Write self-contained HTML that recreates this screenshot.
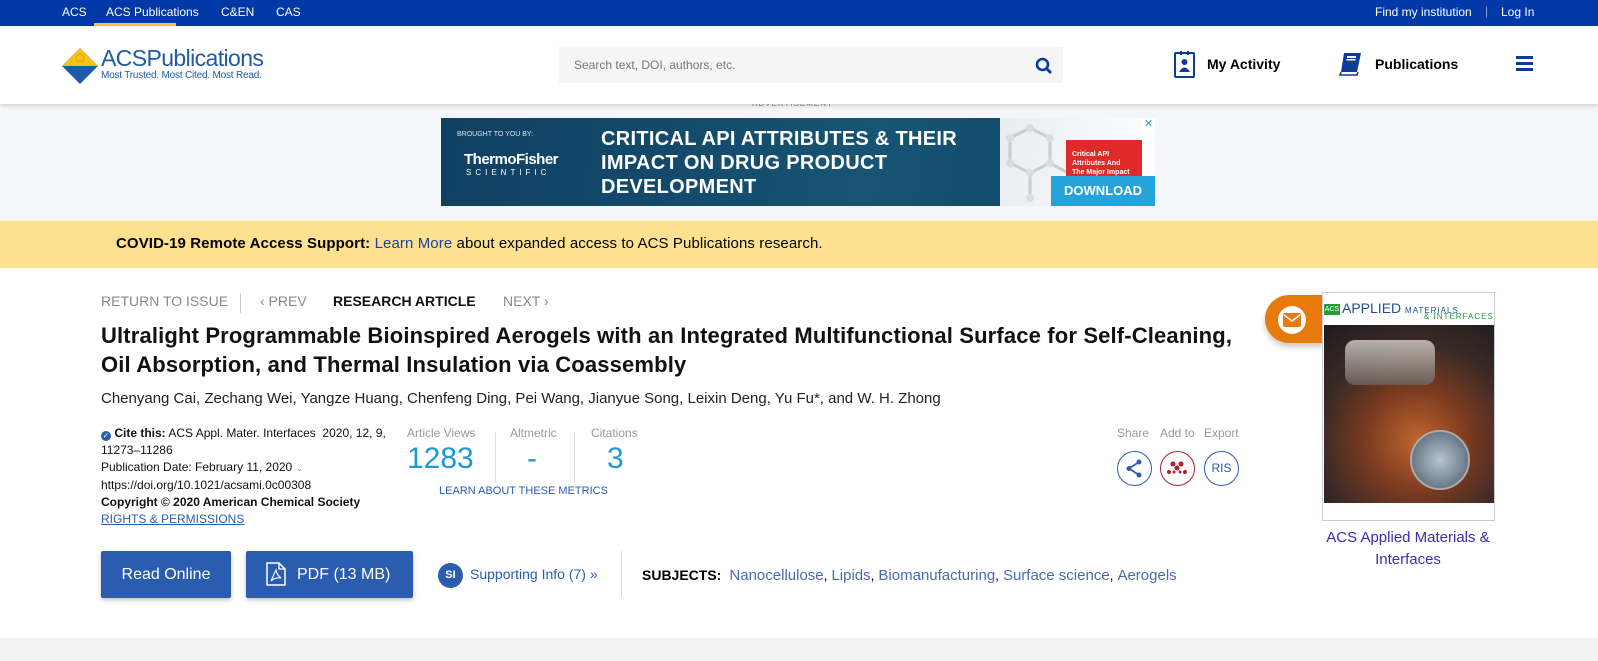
<!DOCTYPE html>
<html><head><meta charset="utf-8"><style>
*{margin:0;padding:0;box-sizing:border-box}
body{width:1598px;height:661px;position:relative;overflow:hidden;font-family:"Liberation Sans",Arial,sans-serif;background:#fff;color:#000}
.a{position:absolute;white-space:nowrap}
a{text-decoration:none}
</style></head><body>
<!-- top bar -->
<div class="a" style="left:0;top:0;width:1598px;height:26px;background:#0038a8"></div>
<div class="a" style="left:62px;top:5px;font-size:12px;color:#fff">ACS</div>
<div class="a" style="left:106px;top:5px;font-size:12px;color:#fff">ACS Publications</div>
<div class="a" style="left:94px;top:23px;width:82px;height:3px;background:#fbc830"></div>
<div class="a" style="left:221px;top:5px;font-size:12px;color:#fff">C&amp;EN</div>
<div class="a" style="left:276px;top:5px;font-size:12px;color:#fff">CAS</div>
<div class="a" style="left:1375px;top:5px;font-size:12px;color:#fff">Find my institution</div>
<div class="a" style="left:1485px;top:4px;font-size:12px;color:#8aa0d8">|</div>
<div class="a" style="left:1501px;top:5px;font-size:12px;color:#fff">Log In</div>
<!-- header -->
<div class="a" style="left:0;top:26px;width:1598px;height:78px;background:#fff;box-shadow:0 2px 4px rgba(0,0,0,.15);z-index:2">
 <svg class="a" style="left:62px;top:22px" width="36" height="36" viewBox="0 0 36 36"><polygon points="0,18 18,0 36,18 18,36" fill="#1f5aa6"/><polygon points="0,18 18,0 36,18" fill="#f5c21b"/><circle cx="18" cy="10" r="4" fill="#f5c21b" stroke="#e0a800"/></svg>
 <div class="a" style="left:101px;top:19px;font-size:23px;color:#1f5aa6;letter-spacing:-.6px">ACS<span style="font-weight:300">Publications</span></div>
 <div class="a" style="left:101px;top:44px;font-size:10px;color:#1f5aa6;letter-spacing:-.2px">Most Trusted. Most Cited. Most Read.</div>
 <div class="a" style="left:559px;top:21px;width:504px;height:36px;background:#f5f5f5"></div>
 <div class="a" style="left:574px;top:32px;font-size:12px;color:#777">Search text, DOI, authors, etc.</div>
 <svg class="a" style="left:1035px;top:31px" width="18" height="18" viewBox="0 0 18 18"><circle cx="7.5" cy="7.5" r="5.5" fill="none" stroke="#0d3b99" stroke-width="2.6"/><line x1="11.5" y1="11.5" x2="16" y2="16" stroke="#0d3b99" stroke-width="2.8"/></svg>
 <svg class="a" style="left:1173px;top:24px" width="23" height="28" viewBox="0 0 23 28"><rect x="2" y="3" width="19" height="24" fill="none" stroke="#0d3b99" stroke-width="2" rx="1"/><rect x="7" y="1" width="2" height="4" fill="#0d3b99"/><rect x="14" y="1" width="2" height="4" fill="#0d3b99"/><circle cx="11.5" cy="12" r="3" fill="#0d3b99"/><path d="M6 22 Q11.5 13 17 22Z" fill="#0d3b99"/></svg>
 <div class="a" style="left:1207px;top:30px;font-size:14px;font-weight:bold">My Activity</div>
 <svg class="a" style="left:1338px;top:26px" width="24" height="24" viewBox="0 0 24 24"><path d="M6 1 H23 L19 20 H3 Z" fill="#0d3b99"/><path d="M3 20 L2 23 H19 L20 20" fill="none" stroke="#0d3b99" stroke-width="1.5"/><rect x="9" y="4" width="9" height="2" fill="#fff"/><rect x="8.5" y="7" width="9" height="1.5" fill="#fff"/></svg>
 <div class="a" style="left:1375px;top:30px;font-size:14px;font-weight:bold">Publications</div>
 <div class="a" style="left:1516px;top:30px;width:17px;height:3px;background:#0d3b99;box-shadow:0 6px 0 #0d3b99,0 12px 0 #0d3b99"></div>
</div>
<!-- ad -->
<div class="a" style="left:0;top:104px;width:1598px;height:117px;background:#f5f6fa"></div>
<div class="a" style="left:752px;top:99px;font-size:8px;color:#888;letter-spacing:1px">ADVERTISEMENT</div>
<div class="a" style="left:441px;top:118px;width:714px;height:88px;background:linear-gradient(100deg,#0f3f62,#175473 60%,#0e4466)"></div>
<div class="a" style="left:457px;top:131px;font-size:7px;color:#dfe7ee">BROUGHT TO YOU BY:</div>
<div class="a" style="left:464px;top:151px;font-size:15px;font-weight:bold;color:#fff;letter-spacing:-.5px">ThermoFisher</div>
<div class="a" style="left:466px;top:168px;font-size:8px;color:#fff;letter-spacing:4px">SCIENTIFIC</div>
<div class="a" style="left:601px;top:127px;font-size:20px;font-weight:bold;color:#fff;line-height:24px;letter-spacing:.3px">CRITICAL API ATTRIBUTES &amp; THEIR<br>IMPACT ON DRUG PRODUCT<br>DEVELOPMENT</div>
<div class="a" style="left:1000px;top:118px;width:155px;height:88px;background:linear-gradient(100deg,#e8ecf0,#ffffff)"></div>
<svg class="a" style="left:1000px;top:118px" width="70" height="88" viewBox="0 0 70 88"><path d="M10 20 L30 10 L50 20 L50 45 L30 55 L10 45 Z M30 55 L30 80 M50 45 L68 55" fill="none" stroke="#c8cdd4" stroke-width="3"/><g fill="#d8dde3"><circle cx="10" cy="20" r="4"/><circle cx="30" cy="10" r="4"/><circle cx="50" cy="20" r="4"/><circle cx="50" cy="45" r="4"/><circle cx="30" cy="55" r="4"/><circle cx="10" cy="45" r="4"/><circle cx="30" cy="80" r="4"/></g></svg>
<div class="a" style="left:1066px;top:140px;width:76px;height:50px;background:#e02a2a"></div>
<div class="a" style="left:1072px;top:150px;font-size:7px;color:#fff;font-weight:bold;line-height:9px">Critical API<br>Attributes And<br>The Major Impact</div>
<div class="a" style="left:1051px;top:176px;width:104px;height:30px;background:#27a3dc;color:#fff;font-weight:bold;font-size:13px;text-align:center;line-height:30px">DOWNLOAD</div>
<div class="a" style="left:1142px;top:118px;width:13px;height:13px;background:#fff;color:#27a3dc;font-size:11px;line-height:13px;text-align:center">✕</div>
<!-- covid -->
<div class="a" style="left:0;top:221px;width:1598px;height:47px;background:#fde18f"></div>
<div class="a" style="left:116px;top:235px;font-size:15px;letter-spacing:.1px"><b>COVID-19 Remote Access Support:</b> <span style="color:#1f3fa8">Learn More</span> about expanded access to ACS Publications research.</div>
<!-- nav -->
<div class="a" style="left:101px;top:293px;font-size:14px;color:#888">RETURN TO ISSUE</div>
<div class="a" style="left:240px;top:293px;width:1px;height:20px;background:#ccc"></div>
<div class="a" style="left:260px;top:293px;font-size:14px;color:#888">‹ PREV</div>
<div class="a" style="left:333px;top:293px;font-size:14px;font-weight:bold;color:#111">RESEARCH ARTICLE</div>
<div class="a" style="left:503px;top:293px;font-size:14px;color:#888">NEXT ›</div>
<div class="a" style="left:101px;top:321px;font-size:22px;font-weight:bold;line-height:29px;color:#111;letter-spacing:.15px">Ultralight Programmable Bioinspired Aerogels with an Integrated Multifunctional Surface for Self-Cleaning,<br>Oil Absorption, and Thermal Insulation via Coassembly</div>
<div class="a" style="left:101px;top:390px;font-size:15px;color:#222">Chenyang Cai, Zechang Wei, Yangze Huang, Chenfeng Ding, Pei Wang, Jianyue Song, Leixin Deng, Yu Fu*, and W. H. Zhong</div>
<!-- cite -->
<div class="a" style="left:101px;top:425px;font-size:12px;line-height:17px;color:#111"><span style="display:inline-block;width:10px;height:10px;border-radius:5px;background:#2a5db0;color:#fff;font-size:8px;line-height:10px;text-align:center;vertical-align:-1px">✓</span> <b>Cite this:</b> ACS Appl. Mater. Interfaces&nbsp; 2020, 12, 9,<br>11273–11286<br>Publication Date: February 11, 2020 <span style="color:#888;font-size:9px">⌄</span><br>https://doi.org/10.1021/acsami.0c00308<br><b>Copyright © 2020 American Chemical Society</b><br><span style="color:#2a5db0;text-decoration:underline">RIGHTS &amp; PERMISSIONS</span></div>
<!-- metrics -->
<div class="a" style="left:407px;top:426px;font-size:12px;color:#999">Article Views</div>
<div class="a" style="left:510px;top:426px;font-size:12px;color:#999">Altmetric</div>
<div class="a" style="left:591px;top:426px;font-size:12px;color:#999">Citations</div>
<div class="a" style="left:407px;top:442px;font-size:30px;color:#1b9ad9">1283</div>
<div class="a" style="left:527px;top:442px;font-size:30px;color:#1b9ad9">-</div>
<div class="a" style="left:607px;top:442px;font-size:30px;color:#1b9ad9">3</div>
<div class="a" style="left:495px;top:432px;width:1px;height:50px;background:#ddd"></div>
<div class="a" style="left:574px;top:432px;width:1px;height:50px;background:#ddd"></div>
<div class="a" style="left:439px;top:485px;font-size:11px;color:#2a5db0">LEARN ABOUT THESE METRICS</div>
<!-- share -->
<div class="a" style="left:1117px;top:426px;font-size:12px;color:#999">Share</div>
<div class="a" style="left:1160px;top:426px;font-size:12px;color:#999">Add to</div>
<div class="a" style="left:1204px;top:426px;font-size:12px;color:#999">Export</div>
<div class="a" style="left:1117px;top:451px;width:35px;height:35px;border:1.5px solid #2a5db0;border-radius:50%"></div>
<svg class="a" style="left:1124px;top:458px" width="21" height="21" viewBox="0 0 21 21"><circle cx="15" cy="4" r="2.5" fill="#2a5db0"/><circle cx="5" cy="10.5" r="2.5" fill="#2a5db0"/><circle cx="15" cy="17" r="2.5" fill="#2a5db0"/><path d="M15 4 L5 10.5 L15 17" fill="none" stroke="#2a5db0" stroke-width="1.8"/></svg>
<div class="a" style="left:1160px;top:451px;width:35px;height:35px;border:1.5px solid #b0202a;border-radius:50%"></div>
<svg class="a" style="left:1166px;top:458px" width="23" height="20" viewBox="0 0 23 20"><g fill="#b0202a"><circle cx="7" cy="6" r="2.5"/><circle cx="15" cy="6" r="2.5"/><circle cx="11" cy="10" r="2.5"/><circle cx="3" cy="14" r="2"/><circle cx="19" cy="14" r="2"/><circle cx="8" cy="14" r="1.5"/><circle cx="14" cy="14" r="1.5"/></g></svg>
<div class="a" style="left:1204px;top:451px;width:35px;height:35px;border:1.5px solid #2a5db0;border-radius:50%;font-size:12px;color:#2a5db0;text-align:center;line-height:32px">RIS</div>
<!-- cover -->
<div class="a" style="left:1265px;top:295px;width:62px;height:48px;background:#e87a0c;border-radius:24px 0 0 24px;box-shadow:0 4px 6px rgba(0,0,0,.2)"></div>
<div class="a" style="left:1278px;top:306px;width:28px;height:28px;background:#fff;border-radius:50%"></div>
<svg class="a" style="left:1283px;top:313px" width="18" height="14" viewBox="0 0 18 14"><rect width="18" height="14" rx="2" fill="#e87a0c"/><path d="M1 2 L9 8 L17 2" fill="none" stroke="#fff" stroke-width="1.6"/></svg>
<div class="a" style="left:1322px;top:292px;width:173px;height:229px;border:1px solid #ccd;background:#fff"></div>
<div class="a" style="left:1324px;top:304px;width:16px;height:11px;background:#2a9a3a;color:#fff;font-size:7px;line-height:11px;text-align:center">ACS</div>
<div class="a" style="left:1342px;top:300px;font-size:14px;color:#1b4f9a">APPLIED <span style="font-size:8px;letter-spacing:1px">MATERIALS</span></div>
<div class="a" style="left:1424px;top:312px;font-size:8px;color:#2a9a3a;letter-spacing:1px">&amp; INTERFACES</div>
<div class="a" style="left:1324px;top:325px;width:170px;height:178px;background:radial-gradient(circle at 55% 65%,#c0652e 0,#7a3a20 35%,#3a2a26 65%,#1d1a1c 100%)"></div>
<div class="a" style="left:1345px;top:340px;width:90px;height:45px;border-radius:10px;background:linear-gradient(#d8d4cc,#6a655e);opacity:.8"></div>
<div class="a" style="left:1410px;top:430px;width:60px;height:60px;border-radius:50%;background:radial-gradient(circle,#b8c4d0,#4a5868);border:2px solid #aaa"></div>
<div class="a" style="left:1324px;top:503px;width:170px;height:17px;background:#fff"></div>
<div class="a" style="left:1308px;top:527px;width:200px;text-align:center;font-size:15px;line-height:22px;color:#3a2cb8;white-space:normal">ACS Applied Materials &amp;<br>Interfaces</div>
<!-- buttons -->
<div class="a" style="left:101px;top:551px;width:130px;height:47px;background:#2a5db0;border-radius:2px;box-shadow:0 2px 4px rgba(0,0,0,.25);color:#fff;font-size:16px;text-align:center;line-height:47px">Read Online</div>
<div class="a" style="left:246px;top:551px;width:167px;height:47px;background:#2a5db0;border-radius:2px;box-shadow:0 2px 4px rgba(0,0,0,.25);color:#fff;font-size:16px;line-height:47px;padding-left:51px">PDF (13 MB)</div>
<svg class="a" style="left:266px;top:562px" width="20" height="24" viewBox="0 0 20 24"><path d="M1 1 H13 L19 7 V23 H1 Z" fill="none" stroke="#fff" stroke-width="1.5"/><path d="M13 1 V7 H19" fill="none" stroke="#fff" stroke-width="1.3"/><path d="M5 19 Q9 10 10 8 Q11 13 15 16 Q9 15 5 19Z" fill="none" stroke="#fff" stroke-width="1.1"/></svg>
<div class="a" style="left:438px;top:563px;width:25px;height:25px;border-radius:50%;background:#2a5db0;color:#fff;font-size:11px;font-weight:bold;text-align:center;line-height:25px">SI</div>
<div class="a" style="left:470px;top:566px;font-size:14px;color:#2a5db0">Supporting Info (7) »</div>
<div class="a" style="left:621px;top:551px;width:1px;height:47px;background:#ddd"></div>
<div class="a" style="left:642px;top:567px;font-size:14px"><b>SUBJECTS:</b> <span style="color:#4a6ab0;font-size:15px">&nbsp;Nanocellulose</span>, <span style="color:#4a6ab0;font-size:15px">Lipids</span>, <span style="color:#4a6ab0;font-size:15px">Biomanufacturing</span>, <span style="color:#4a6ab0;font-size:15px">Surface science</span>, <span style="color:#4a6ab0;font-size:15px">Aerogels</span></div>
<div class="a" style="left:0;top:638px;width:1598px;height:23px;background:#f2f2f2"></div>
</body></html>
